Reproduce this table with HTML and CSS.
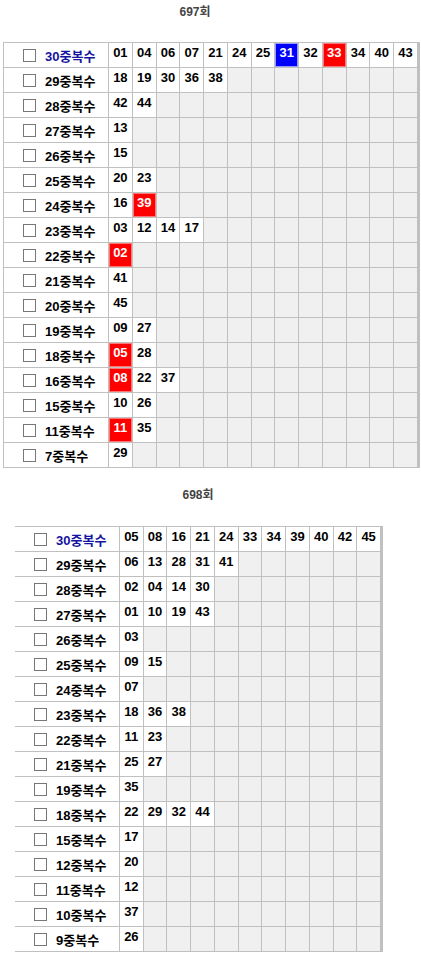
FILE: index.html
```html
<!DOCTYPE html>
<html lang="ko">
<head>
<meta charset="utf-8">
<title>복수 조합</title>
<link rel="stylesheet" href="styles.css">
</head>
<body>
<div class="title t1">697회</div>
<div class="board b1">
<div class="lbl hi"><span class="cb"></span>30중복수</div><div class="n">01</div><div class="n">04</div><div class="n">06</div><div class="n">07</div><div class="n">21</div><div class="n">24</div><div class="n">25</div><div class="n bl">31</div><div class="n">32</div><div class="n r">33</div><div class="n">34</div><div class="n">40</div><div class="n">43</div>
<div class="lbl"><span class="cb"></span>29중복수</div><div class="n">18</div><div class="n">19</div><div class="n">30</div><div class="n">36</div><div class="n">38</div><div class="e"></div><div class="e"></div><div class="e"></div><div class="e"></div><div class="e"></div><div class="e"></div><div class="e"></div><div class="e"></div>
<div class="lbl"><span class="cb"></span>28중복수</div><div class="n">42</div><div class="n">44</div><div class="e"></div><div class="e"></div><div class="e"></div><div class="e"></div><div class="e"></div><div class="e"></div><div class="e"></div><div class="e"></div><div class="e"></div><div class="e"></div><div class="e"></div>
<div class="lbl"><span class="cb"></span>27중복수</div><div class="n">13</div><div class="e"></div><div class="e"></div><div class="e"></div><div class="e"></div><div class="e"></div><div class="e"></div><div class="e"></div><div class="e"></div><div class="e"></div><div class="e"></div><div class="e"></div><div class="e"></div>
<div class="lbl"><span class="cb"></span>26중복수</div><div class="n">15</div><div class="e"></div><div class="e"></div><div class="e"></div><div class="e"></div><div class="e"></div><div class="e"></div><div class="e"></div><div class="e"></div><div class="e"></div><div class="e"></div><div class="e"></div><div class="e"></div>
<div class="lbl"><span class="cb"></span>25중복수</div><div class="n">20</div><div class="n">23</div><div class="e"></div><div class="e"></div><div class="e"></div><div class="e"></div><div class="e"></div><div class="e"></div><div class="e"></div><div class="e"></div><div class="e"></div><div class="e"></div><div class="e"></div>
<div class="lbl"><span class="cb"></span>24중복수</div><div class="n">16</div><div class="n r">39</div><div class="e"></div><div class="e"></div><div class="e"></div><div class="e"></div><div class="e"></div><div class="e"></div><div class="e"></div><div class="e"></div><div class="e"></div><div class="e"></div><div class="e"></div>
<div class="lbl"><span class="cb"></span>23중복수</div><div class="n">03</div><div class="n">12</div><div class="n">14</div><div class="n">17</div><div class="e"></div><div class="e"></div><div class="e"></div><div class="e"></div><div class="e"></div><div class="e"></div><div class="e"></div><div class="e"></div><div class="e"></div>
<div class="lbl"><span class="cb"></span>22중복수</div><div class="n r">02</div><div class="e"></div><div class="e"></div><div class="e"></div><div class="e"></div><div class="e"></div><div class="e"></div><div class="e"></div><div class="e"></div><div class="e"></div><div class="e"></div><div class="e"></div><div class="e"></div>
<div class="lbl"><span class="cb"></span>21중복수</div><div class="n">41</div><div class="e"></div><div class="e"></div><div class="e"></div><div class="e"></div><div class="e"></div><div class="e"></div><div class="e"></div><div class="e"></div><div class="e"></div><div class="e"></div><div class="e"></div><div class="e"></div>
<div class="lbl"><span class="cb"></span>20중복수</div><div class="n">45</div><div class="e"></div><div class="e"></div><div class="e"></div><div class="e"></div><div class="e"></div><div class="e"></div><div class="e"></div><div class="e"></div><div class="e"></div><div class="e"></div><div class="e"></div><div class="e"></div>
<div class="lbl"><span class="cb"></span>19중복수</div><div class="n">09</div><div class="n">27</div><div class="e"></div><div class="e"></div><div class="e"></div><div class="e"></div><div class="e"></div><div class="e"></div><div class="e"></div><div class="e"></div><div class="e"></div><div class="e"></div><div class="e"></div>
<div class="lbl"><span class="cb"></span>18중복수</div><div class="n r">05</div><div class="n">28</div><div class="e"></div><div class="e"></div><div class="e"></div><div class="e"></div><div class="e"></div><div class="e"></div><div class="e"></div><div class="e"></div><div class="e"></div><div class="e"></div><div class="e"></div>
<div class="lbl"><span class="cb"></span>16중복수</div><div class="n r">08</div><div class="n">22</div><div class="n">37</div><div class="e"></div><div class="e"></div><div class="e"></div><div class="e"></div><div class="e"></div><div class="e"></div><div class="e"></div><div class="e"></div><div class="e"></div><div class="e"></div>
<div class="lbl"><span class="cb"></span>15중복수</div><div class="n">10</div><div class="n">26</div><div class="e"></div><div class="e"></div><div class="e"></div><div class="e"></div><div class="e"></div><div class="e"></div><div class="e"></div><div class="e"></div><div class="e"></div><div class="e"></div><div class="e"></div>
<div class="lbl"><span class="cb"></span>11중복수</div><div class="n r">11</div><div class="n">35</div><div class="e"></div><div class="e"></div><div class="e"></div><div class="e"></div><div class="e"></div><div class="e"></div><div class="e"></div><div class="e"></div><div class="e"></div><div class="e"></div><div class="e"></div>
<div class="lbl"><span class="cb"></span>7중복수</div><div class="n">29</div><div class="e"></div><div class="e"></div><div class="e"></div><div class="e"></div><div class="e"></div><div class="e"></div><div class="e"></div><div class="e"></div><div class="e"></div><div class="e"></div><div class="e"></div><div class="e"></div>
</div>

<div class="title t2">698회</div>
<div class="board b2">
<div class="lbl hi"><span class="cb"></span>30중복수</div><div class="n">05</div><div class="n">08</div><div class="n">16</div><div class="n">21</div><div class="n">24</div><div class="n">33</div><div class="n">34</div><div class="n">39</div><div class="n">40</div><div class="n">42</div><div class="n">45</div>
<div class="lbl"><span class="cb"></span>29중복수</div><div class="n">06</div><div class="n">13</div><div class="n">28</div><div class="n">31</div><div class="n">41</div><div class="e"></div><div class="e"></div><div class="e"></div><div class="e"></div><div class="e"></div><div class="e"></div>
<div class="lbl"><span class="cb"></span>28중복수</div><div class="n">02</div><div class="n">04</div><div class="n">14</div><div class="n">30</div><div class="e"></div><div class="e"></div><div class="e"></div><div class="e"></div><div class="e"></div><div class="e"></div><div class="e"></div>
<div class="lbl"><span class="cb"></span>27중복수</div><div class="n">01</div><div class="n">10</div><div class="n">19</div><div class="n">43</div><div class="e"></div><div class="e"></div><div class="e"></div><div class="e"></div><div class="e"></div><div class="e"></div><div class="e"></div>
<div class="lbl"><span class="cb"></span>26중복수</div><div class="n">03</div><div class="e"></div><div class="e"></div><div class="e"></div><div class="e"></div><div class="e"></div><div class="e"></div><div class="e"></div><div class="e"></div><div class="e"></div><div class="e"></div>
<div class="lbl"><span class="cb"></span>25중복수</div><div class="n">09</div><div class="n">15</div><div class="e"></div><div class="e"></div><div class="e"></div><div class="e"></div><div class="e"></div><div class="e"></div><div class="e"></div><div class="e"></div><div class="e"></div>
<div class="lbl"><span class="cb"></span>24중복수</div><div class="n">07</div><div class="e"></div><div class="e"></div><div class="e"></div><div class="e"></div><div class="e"></div><div class="e"></div><div class="e"></div><div class="e"></div><div class="e"></div><div class="e"></div>
<div class="lbl"><span class="cb"></span>23중복수</div><div class="n">18</div><div class="n">36</div><div class="n">38</div><div class="e"></div><div class="e"></div><div class="e"></div><div class="e"></div><div class="e"></div><div class="e"></div><div class="e"></div><div class="e"></div>
<div class="lbl"><span class="cb"></span>22중복수</div><div class="n">11</div><div class="n">23</div><div class="e"></div><div class="e"></div><div class="e"></div><div class="e"></div><div class="e"></div><div class="e"></div><div class="e"></div><div class="e"></div><div class="e"></div>
<div class="lbl"><span class="cb"></span>21중복수</div><div class="n">25</div><div class="n">27</div><div class="e"></div><div class="e"></div><div class="e"></div><div class="e"></div><div class="e"></div><div class="e"></div><div class="e"></div><div class="e"></div><div class="e"></div>
<div class="lbl"><span class="cb"></span>19중복수</div><div class="n">35</div><div class="e"></div><div class="e"></div><div class="e"></div><div class="e"></div><div class="e"></div><div class="e"></div><div class="e"></div><div class="e"></div><div class="e"></div><div class="e"></div>
<div class="lbl"><span class="cb"></span>18중복수</div><div class="n">22</div><div class="n">29</div><div class="n">32</div><div class="n">44</div><div class="e"></div><div class="e"></div><div class="e"></div><div class="e"></div><div class="e"></div><div class="e"></div><div class="e"></div>
<div class="lbl"><span class="cb"></span>15중복수</div><div class="n">17</div><div class="e"></div><div class="e"></div><div class="e"></div><div class="e"></div><div class="e"></div><div class="e"></div><div class="e"></div><div class="e"></div><div class="e"></div><div class="e"></div>
<div class="lbl"><span class="cb"></span>12중복수</div><div class="n">20</div><div class="e"></div><div class="e"></div><div class="e"></div><div class="e"></div><div class="e"></div><div class="e"></div><div class="e"></div><div class="e"></div><div class="e"></div><div class="e"></div>
<div class="lbl"><span class="cb"></span>11중복수</div><div class="n">12</div><div class="e"></div><div class="e"></div><div class="e"></div><div class="e"></div><div class="e"></div><div class="e"></div><div class="e"></div><div class="e"></div><div class="e"></div><div class="e"></div>
<div class="lbl"><span class="cb"></span>10중복수</div><div class="n">37</div><div class="e"></div><div class="e"></div><div class="e"></div><div class="e"></div><div class="e"></div><div class="e"></div><div class="e"></div><div class="e"></div><div class="e"></div><div class="e"></div>
<div class="lbl"><span class="cb"></span>9중복수</div><div class="n">26</div><div class="e"></div><div class="e"></div><div class="e"></div><div class="e"></div><div class="e"></div><div class="e"></div><div class="e"></div><div class="e"></div><div class="e"></div><div class="e"></div>
</div>
</body>
</html>
```
FILE: styles.css
```css
html, body {
  margin: 0;
  padding: 0;
  background: #fff;
}
body {
  font-family: "Liberation Sans", "Noto Sans CJK KR", sans-serif;
  width: 421px;
}
.title {
  box-sizing: border-box;
  height: 42px;
  line-height: 24px;
  font-size: 12px;
  font-weight: bold;
  color: #444;
  text-align: center;
}
.t1 {
  padding-right: 31px;
}
.t2 {
  margin-top: 15px;
  height: 43px;
  padding-right: 25px;
}
.board {
  box-sizing: border-box;
  display: grid;
  gap: 1px;
  grid-auto-rows: 24px;
  background: #c0c0c0;
}
.b1 {
  margin-left: 3px;
  width: 417px;
  padding: 1px 3px 1px 1px;
  grid-template-columns: 104px repeat(13, 1fr);
}
.b2 {
  margin-left: 15px;
  width: 368px;
  padding: 1px 3px 1px 0;
  grid-template-columns: 104px repeat(11, 1fr);
}
.lbl {
  background: #fff;
  display: flex;
  align-items: center;
  padding-left: 19px;
  font-size: 13px;
  font-weight: bold;
  color: #000;
  white-space: nowrap;
}
.hi {
  color: #1414a0;
}
.cb {
  flex: none;
  width: 11px;
  height: 11px;
  border: 1px solid #777;
  background: #fff;
  margin-right: 9px;
}
.n {
  background: #fff;
  text-align: center;
  font-size: 13px;
  font-weight: bold;
  line-height: 20px;
  color: #000;
}
.e {
  background: #f0f0f0;
}
.r {
  background: #f00;
  color: #fff;
  box-shadow: inset 0 0 0 1px #f77;
}
.bl {
  background: #00f;
  color: #fff;
  box-shadow: inset 0 0 0 1px #99f;
}
```
